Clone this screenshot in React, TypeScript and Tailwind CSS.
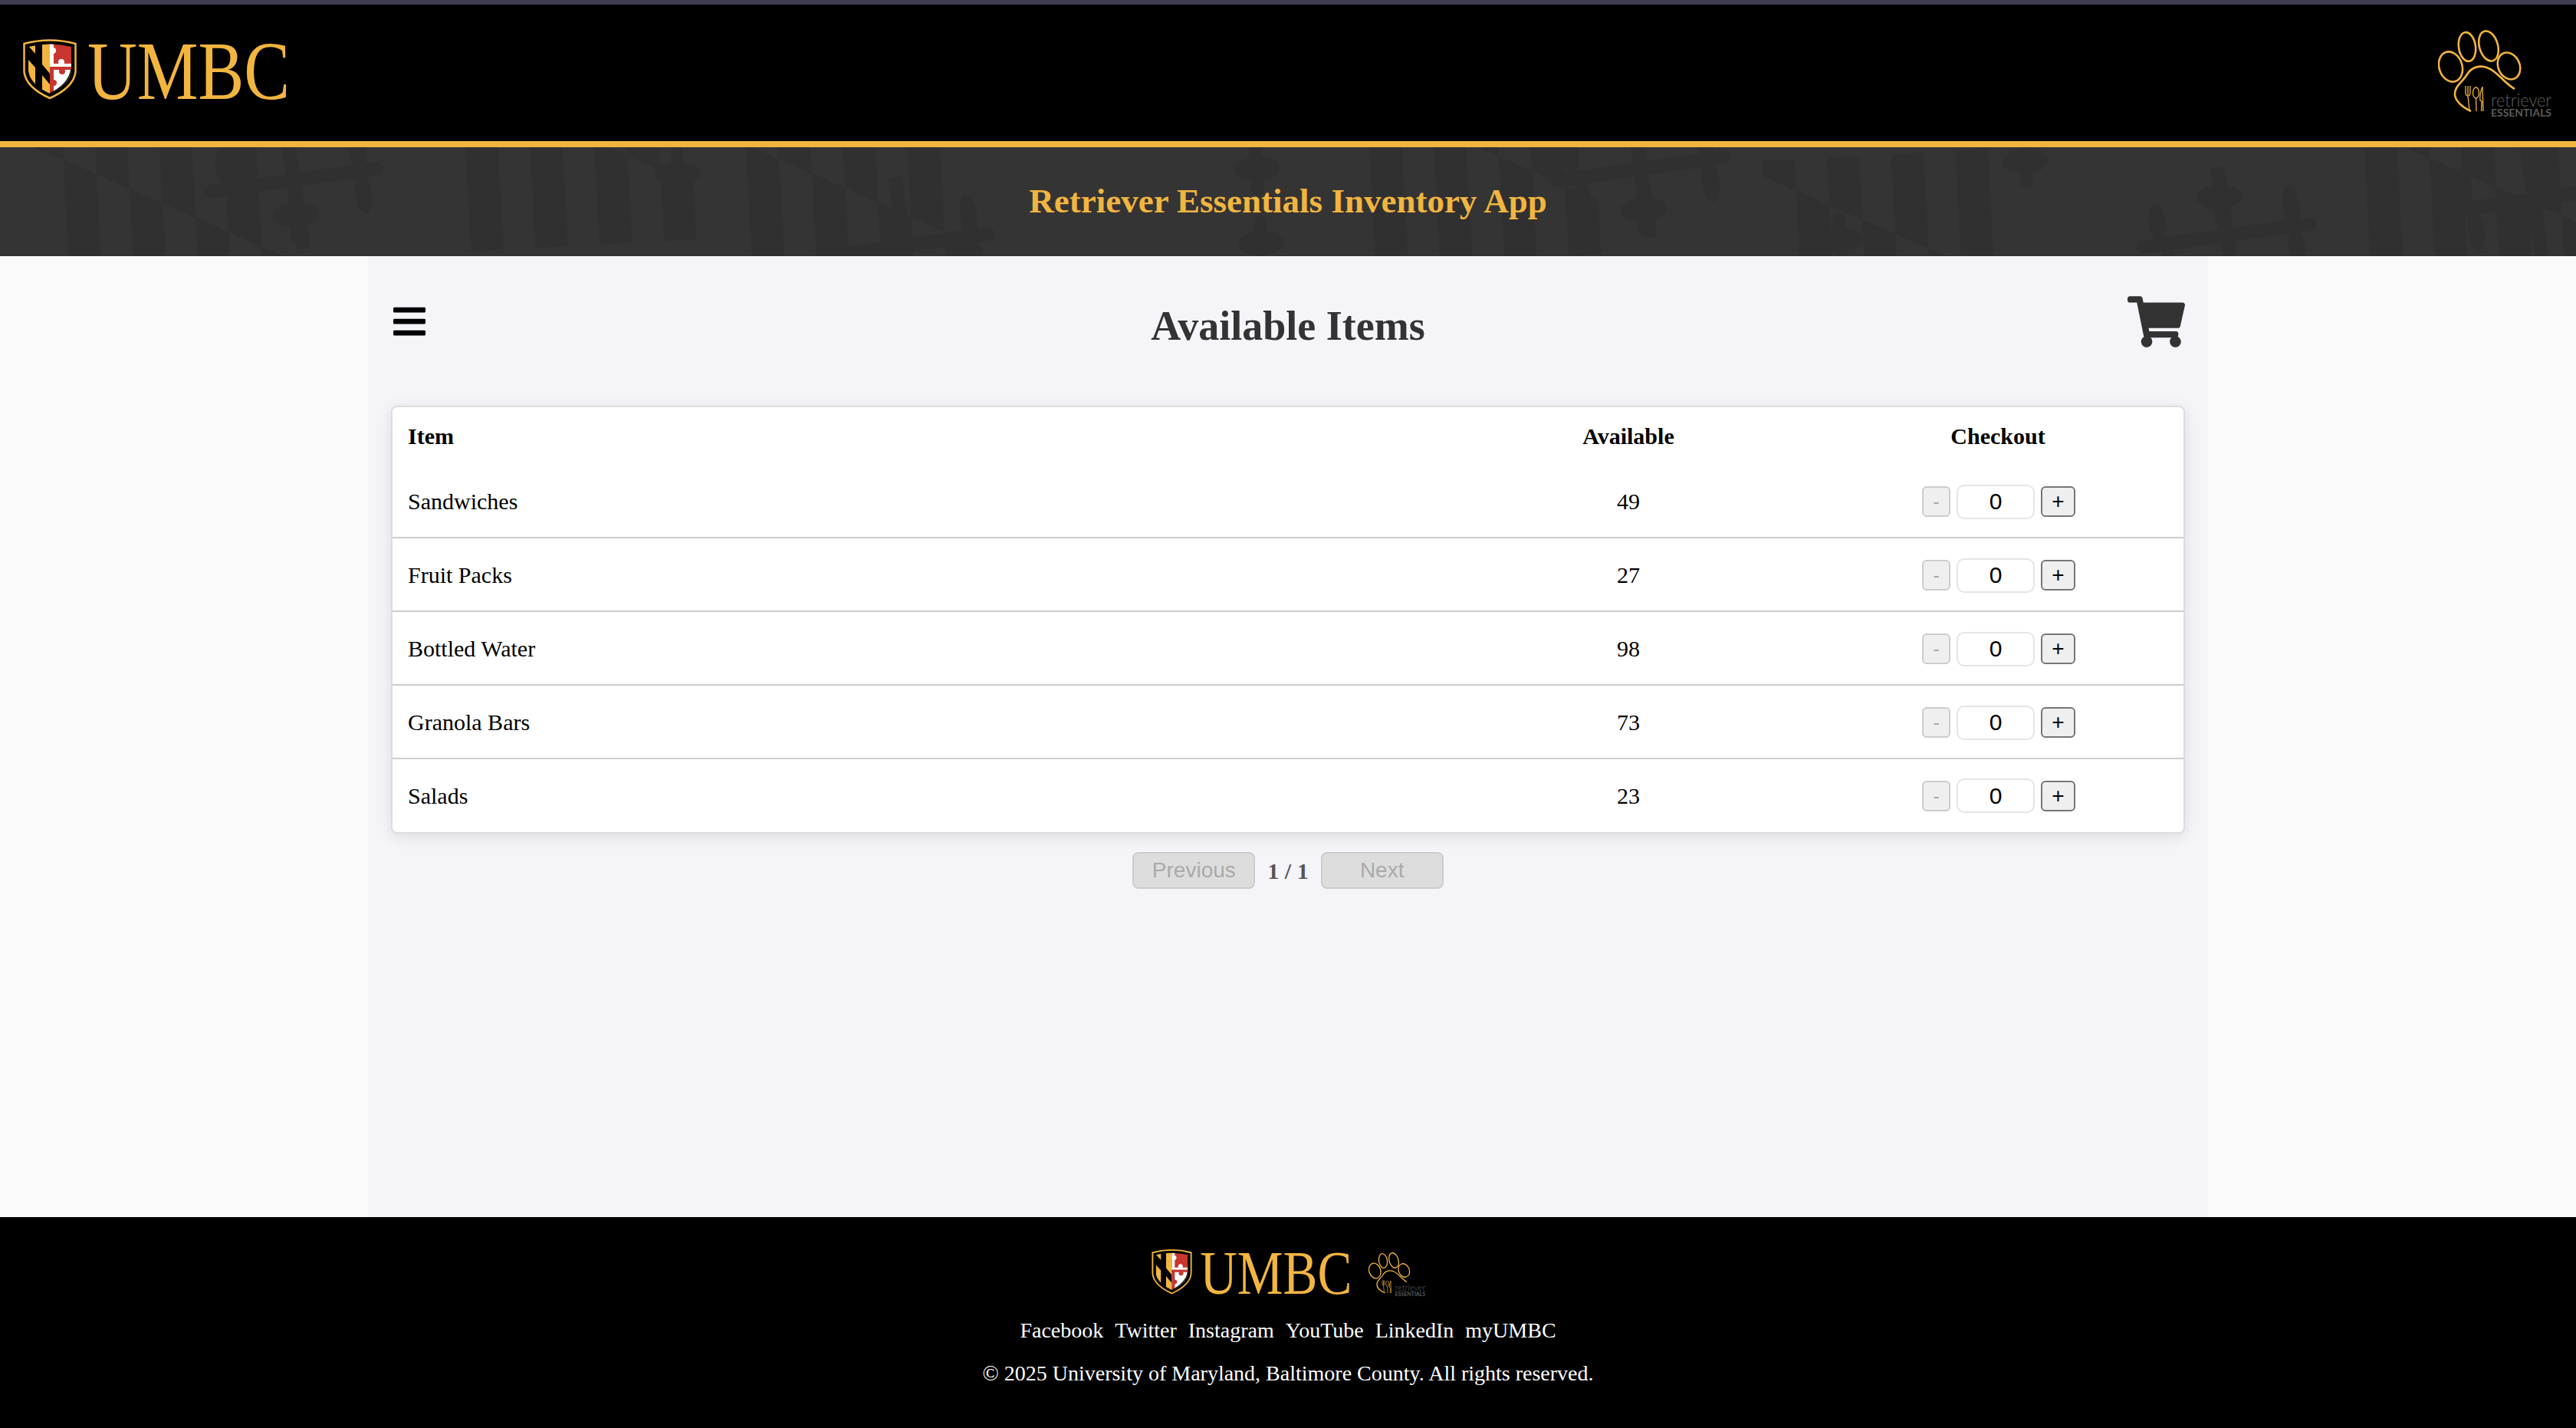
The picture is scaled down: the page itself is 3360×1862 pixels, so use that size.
import { FaBars, FaShoppingCart } from 'react-icons/fa';

const items = [
  { name: 'Sandwiches', available: 49 },
  { name: 'Fruit Packs', available: 27 },
  { name: 'Bottled Water', available: 98 },
  { name: 'Granola Bars', available: 73 },
  { name: 'Salads', available: 23 },
];

const footerLinks = ['Facebook', 'Twitter', 'Instagram', 'YouTube', 'LinkedIn', 'myUMBC'];

const GOLD = '#f1b540';
const DARK = '#303030';

// logo: shield plus wordmark, real <text> so it scales with the svg
function UmbcLogo({ className }: { className: string }) {
  return (
    <svg viewBox="0 -16 410 120" className={className}>
      <defs>
        <clipPath id="shield">
          <path d="M7 11 Q35 4 63 11 L63 42 Q61 60 35 72 Q9 60 7 42 Z" />
        </clipPath>
      </defs>
      <path d="M1.5 7 Q35 -2 68.500 7 L68.500 44 Q66 64 35 78 Q4 64 1.500 44 Z" fill="none" stroke={GOLD} strokeWidth="2.500" />
      <g clipPath="url(#shield)">
        <rect x="7" y="4" width="28" height="70" fill="#000" />
        <polygon points="7,10 16,20 16,4 7,4" fill={GOLD} />
        <polygon points="25,4 35,4 35,46 25,34" fill={GOLD} />
        <polygon points="7,28 16,38 16,60 7,60" fill={GOLD} />
        <polygon points="16,38 16,20 25,34 25,48" fill="#000" />
        <polygon points="25,48 35,60 35,74 25,74" fill={GOLD} />
        <rect x="35" y="4" width="28" height="33" fill="#c8362f" />
        <rect x="35" y="37" width="28" height="37" fill="#fff" />
        <rect x="35" y="4" width="5" height="33" fill="#fff" />
        <circle cx="39" cy="16" r="4" fill="#fff" />
        <circle cx="50" cy="31" r="4" fill="#fff" />
        <rect x="35" y="33" width="28" height="4" fill="#fff" />
        <rect x="35" y="37" width="28" height="4" fill="#c8362f" />
        <rect x="35" y="37" width="5" height="37" fill="#c8362f" />
        <circle cx="51" cy="43" r="4" fill="#c8362f" />
        <circle cx="40" cy="58" r="4" fill="#c8362f" />
        <path d="M35 72 Q60 60 63 40" fill="none" stroke="#000" strokeWidth="1.500" />
      </g>
      <text
        x="84"
        y="79"
        textLength="264"
        lengthAdjust="spacingAndGlyphs"
        fill={GOLD}
        fontFamily="Liberation Serif, serif"
        fontSize="108"
      >
        UMBC
      </text>
    </svg>
  );
}

function PawLogo({ className }: { className: string }) {
  return (
    <svg viewBox="0 0 170 122" className={className}>
      <g fill="none" stroke={GOLD} strokeWidth="2.600">
        <ellipse cx="16.500" cy="50" rx="15" ry="20" transform="rotate(-18 16.500 50)" />
        <ellipse cx="38" cy="24" rx="11" ry="19" transform="rotate(-8 38 24)" />
        <ellipse cx="66" cy="23" rx="12" ry="20" transform="rotate(-16 66 23)" />
        <ellipse cx="92.500" cy="49" rx="14" ry="18" transform="rotate(-24 92.500 49)" />
        <path d="M43 108 C30 102 21 93 22 84 C23 74 32 70 38 60 C44 50 56 47 66 52 C78 57 86 71 100 79" />
        <g strokeWidth="1.300">
          <path d="M36 75 V84 Q36 88 39 88 L41 107 M39 75 V87 M42 75 V84 Q42 88 39 88" />
          <ellipse cx="49.500" cy="84" rx="4" ry="7" />
          <path d="M49.500 91 L50 108 M58 76 Q54 86 55 94 L57 95 L56.500 108 M58 76 L59 108" />
        </g>
      </g>
      <text x="69" y="102" textLength="79" lengthAdjust="spacingAndGlyphs" fill="#5f5f5f" fontFamily="Lato, sans-serif" fontWeight="300" fontSize="24">
        retriever
      </text>
      <text x="69" y="115" textLength="79" lengthAdjust="spacingAndGlyphs" fill="#5a5a5a" fontFamily="Lato, sans-serif" fontWeight="700" fontSize="14">
        ESSENTIALS
      </text>
    </svg>
  );
}

// one quarter of the flag: bars flipped along a diagonal
function CalvertBars({ x, y }: { x: number; y: number }) {
  const bars = [0, 84, 168, 252];
  return (
    <g transform={`translate(${x} ${y})`}>
      {bars.map((b) => (
        <polygon key={b} points={`${b},-20 ${b + 42},-20 ${b + 42},${(b + 42) * 0.5} ${b},${b * 0.5}`} fill={DARK} />
      ))}
      {bars.map((b) => (
        <polygon key={b} points={`${b + 42},${(b + 42) * 0.5} ${b + 84},${(b + 84) * 0.5} ${b + 84},240 ${b + 42},240`} fill={DARK} />
      ))}
    </g>
  );
}

function Cross({ x, y }: { x: number; y: number }) {
  return (
    <g transform={`translate(${x} ${y})`} fill={DARK}>
      <rect x="-118" y="-9" width="236" height="18" rx="9" />
      <rect x="-9" y="-90" width="18" height="180" />
      <ellipse cx="-88" cy="-30" rx="11" ry="24" />
      <ellipse cx="88" cy="-26" rx="11" ry="28" />
      <ellipse cx="-80" cy="30" rx="11" ry="26" />
      <ellipse cx="88" cy="30" rx="11" ry="26" />
    </g>
  );
}

function Clover({ x, y }: { x: number; y: number }) {
  return (
    <g transform={`translate(${x} ${y})`} fill={DARK}>
      <ellipse cx="0" cy="0" rx="30" ry="16" />
      <rect x="-8" y="-36" width="16" height="72" rx="8" />
    </g>
  );
}

function FlagPattern() {
  const blocks = [
    [40, 190],
    [560, 90],
    [930, 170],
    [1740, 110],
    [2300, 230],
    [3040, 150],
  ];
  const crosses = [
    [383, 235],
    [1180, 320],
    [2140, 220],
    [2905, 307],
    [3305, 260],
  ];
  const clovers = [
    [386, 280],
    [884, 227],
    [1639, 220],
    [1645, 317],
    [2144, 273],
    [2400, 313],
    [2642, 210],
    [2895, 257],
  ];
  return (
    <svg viewBox="0 192 3360 142" preserveAspectRatio="none" className="absolute inset-0 h-full w-full">
      {blocks.map(([x, y]) => (
        <g key={x} transform={`rotate(-3 ${x} ${y})`}>
          <CalvertBars x={x} y={y} />
        </g>
      ))}
      {crosses.map(([x, y]) => (
        <g key={x} transform={`rotate(-8 ${x} ${y})`}>
          <Cross x={x} y={y} />
        </g>
      ))}
      {clovers.map(([x, y]) => (
        <g key={x} transform={`rotate(-3 ${x} ${y})`}>
          <Clover x={x} y={y} />
        </g>
      ))}
    </svg>
  );
}

function ItemRow({ name, available, last }: { name: string; available: number; last: boolean }) {
  return (
    <div
      className={`grid grid-cols-[1372px_480px_484px] items-center border-[#ccc] ${last ? 'h-[95px]' : 'h-[96px] border-b-2 pt-[2px]'}`}
    >
      <div className="pl-5">{name}</div>
      <div className="text-center">{available}</div>
      <div className="flex items-center justify-center gap-2 pl-[2px] font-['Liberation_Sans',sans-serif]">
        <button disabled className="h-10 w-[37px] rounded-md border-2 border-[#ccc] bg-[#efefef] text-[26px] leading-none text-[#aaa]">
          -
        </button>
        <input
          readOnly
          value={0}
          className="h-[45px] w-[102px] rounded-[10px] border-2 border-[#e5e5e5] bg-white text-center text-[30px] text-black outline-none"
        />
        <button className="h-10 w-[45px] rounded-md border-2 border-[#767676] bg-[#efefef] text-[28px] leading-none text-black">
          +
        </button>
      </div>
    </div>
  );
}

export default function App() {
  return (
    <div className="flex min-h-[1862px] flex-col font-['Liberation_Serif',serif]">
      <div className="h-[6px] bg-[#403d52]" />

      {/* Header */}
      <header className="flex h-[186px] items-start justify-between border-b-8 border-[#f1b540] bg-black pl-[30px] pr-[10px]">
        <UmbcLogo className="mt-[28px] h-[120px] w-[410px]" />
        <PawLogo className="mt-[31px] h-[122px] w-[170px]" />
      </header>

      <div className="relative flex h-[142px] items-center justify-center overflow-hidden bg-[#343434]">
        <FlagPattern />
        <h2 className="relative text-[45px] font-bold text-[#f1b540]">Retriever Essentials Inventory App</h2>
      </div>

      {/* Main */}
      <main className="flex flex-1 justify-center bg-[#fafafa]">
        <div className="w-[2400px] bg-[#f4f4f9] px-[30px] pt-[53px]">
          <div className="grid h-[142px] grid-cols-[1fr_auto_1fr] items-start">
            <button className="mt-[8px] justify-self-start text-black">
              <FaBars size={48} />
            </button>
            <h1 className="mt-[6px] text-[54px] font-bold leading-[64px] text-[#333]">Available Items</h1>
            <button className="-mt-[5px] justify-self-end text-[#333]">
              <FaShoppingCart size={75} />
            </button>
          </div>

          <div className="rounded-lg border-2 border-[#ddd] bg-white text-[30px] leading-none text-black shadow-[0_4px_20px_rgba(0,0,0,0.1)]">
            <div className="grid h-[75px] grid-cols-[1372px_480px_484px] items-center font-bold">
              <div className="pl-5">Item</div>
              <div className="text-center">Available</div>
              <div className="text-center">Checkout</div>
            </div>
            {items.map((item, i) => (
              <ItemRow key={item.name} name={item.name} available={item.available} last={i === items.length - 1} />
            ))}
          </div>

          <div className="mt-6 flex items-center justify-center gap-4">
            <button disabled className="h-12 w-40 rounded-lg border-2 border-[#ccc] bg-[#ddd] font-['Liberation_Sans',sans-serif] text-[28px] text-[#aaa]">
              Previous
            </button>
            <span className="text-[30px] font-bold text-[#555]">1 / 1</span>
            <button disabled className="h-12 w-40 rounded-lg border-2 border-[#ccc] bg-[#ddd] font-['Liberation_Sans',sans-serif] text-[28px] text-[#aaa]">
              Next
            </button>
          </div>
        </div>
      </main>

      {/* Footer */}
      <footer className="flex h-[275px] flex-col items-center bg-black pt-[41px] text-[28px] text-white">
        <div className="flex items-start gap-[21px]">
          <UmbcLogo className="-mr-[46px] -mt-[12px] h-[90px] w-[308px]" />
          <PawLogo className="-mr-[12px] mt-[4px] h-[61px] w-[85px]" />
        </div>
        <div className="mt-[13px] flex gap-[15px] leading-8">
          {footerLinks.map((link) => (
            <a key={link}>{link}</a>
          ))}
        </div>
        <p className="mt-6 leading-8">© 2025 University of Maryland, Baltimore County. All rights reserved.</p>
      </footer>
    </div>
  );
}
